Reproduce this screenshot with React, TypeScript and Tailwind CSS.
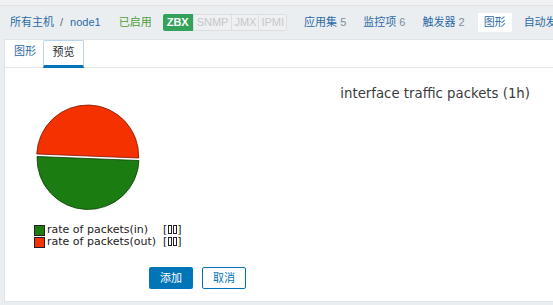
import React from "react";

const cjk = { fontFamily: '"Liberation Sans", "Noto Sans CJK SC", Arial, sans-serif' };
const dv = { fontFamily: '"DejaVu Sans", "Noto Sans CJK SC", sans-serif' };

function Tofu() {
  return <span className="inline-block w-[4px] h-[9px] border border-[#222] mx-[0.5px] align-[-1px]" />;
}

function Pie() {
  const cx = 52, cy = 53, r = 51;
  const a = (2.25 * Math.PI) / 180;
  const dx = r * Math.cos(a), dy = r * Math.sin(a);
  const L = [cx - dx, cy - dy], R = [cx + dx, cy + dy];
  const green = `M${cx},${cy} L${R[0]},${R[1]} A${r},${r} 0 0 1 ${L[0]},${L[1]} Z`;
  const red = `M${cx},${cy} L${L[0]},${L[1]} A${r},${r} 0 0 1 ${R[0]},${R[1]} Z`;
  return (
    <svg width="106" height="108" viewBox="0 0 106 108">
      <path d={green} transform="translate(0,1.5)" fill="#1A7C11" stroke="#0d3e08" strokeWidth="0.8" />
      <path d={red} transform="translate(-0.3,-1)" fill="#F63100" stroke="#7b1800" strokeWidth="0.8" />
    </svg>
  );
}

export default function App() {
  return (
    <div className="w-[553px] h-[305px] bg-[#ebeef0] overflow-hidden text-[11px]" style={cjk}>
      <div className="h-[6px] bg-[#eff1f3] border-b border-[#e0e4e7]" />
      <div className="h-[33px] flex items-center pl-[10px] whitespace-nowrap overflow-hidden">
        <span className="text-[#2b6aa6]">所有主机</span>
        <span className="text-[#5f6b73] ml-[6px] mr-[7px]">/</span>
        <span className="text-[#2b6aa6]">node1</span>
        <span className="text-[#4e9f39] ml-[18px]">已启用</span>
        <div className="flex ml-[11px] h-[17px] text-[11px]">
          <span className="bg-[#34a25a] text-white font-bold px-[4px] leading-[17px] rounded-l-[2px]">ZBX</span>
          <span className="text-[#c4c9cc] bg-[#eef0f1] border border-[#dcdfe1] px-[3px] leading-[15px]">SNMP</span>
          <span className="text-[#c4c9cc] bg-[#eef0f1] border border-l-0 border-[#dcdfe1] px-[2px] leading-[15px]">JMX</span>
          <span className="text-[#c4c9cc] bg-[#eef0f1] border border-l-0 border-[#dcdfe1] px-[2px] leading-[15px] rounded-r-[2px]">IPMI</span>
        </div>
        <span className="text-[#2b6aa6] ml-[17px]">应用集 <span className="text-[#7d8d96]">5</span></span>
        <span className="text-[#2b6aa6] ml-[17px]">监控项 <span className="text-[#7d8d96]">6</span></span>
        <span className="text-[#2b6aa6] ml-[17px]">触发器 <span className="text-[#7d8d96]">2</span></span>
        <span className="text-[#2b6aa6] ml-[13px] bg-white px-[6px] h-[19px] leading-[19px]">图形</span>
        <span className="text-[#2b6aa6] ml-[12px]">自动发现规则</span>
      </div>
      <div className="ml-[4px] h-[263px] bg-white border-l border-t border-b border-[#dfe4e7]">
        <div className="h-[28px] flex items-end border-b border-[#e6e9eb]">
          <span className="text-[#2b6aa6] ml-[9px] mb-[8px]">图形</span>
          <span className="ml-[7px] h-[28px] w-[41px] border border-[#b7d5f0] border-b-[3px] border-b-[#0275b8] rounded-t-[2px] flex items-center justify-center text-[#1f2c33] mb-[-1px] pb-[1px]">预览</span>
        </div>
        <div className="relative">
          <div className="flex justify-end pr-[23px] pt-[18px]">
            <span className="text-[13.3px] leading-[16px] text-[#3b3b3b]" style={dv}>interface traffic packets (1h)</span>
          </div>
          <div className="ml-[31px] mt-[2px]">
            <Pie />
          </div>
          <div className="ml-[29px] mt-[12px] text-[11px] text-[#222] leading-[12px]" style={dv}>
            <div className="flex items-center">
              <span className="w-[11px] h-[11px] bg-[#1A7C11] border border-[#222]" />
              <span className="ml-[2px] w-[116px]">rate of packets(in)</span>
              <span>[<Tofu /><Tofu />]</span>
            </div>
            <div className="flex items-center">
              <span className="w-[11px] h-[11px] bg-[#F63100] border border-[#222]" />
              <span className="ml-[2px] w-[116px]">rate of packets(out)</span>
              <span>[<Tofu /><Tofu />]</span>
            </div>
          </div>
          <div className="flex ml-[144px] mt-[19px] gap-[9px]">
            <button className="w-[44px] h-[22px] bg-[#0275b8] text-white rounded-[2px] text-[11px]" style={cjk}>添加</button>
            <button className="w-[44px] h-[22px] bg-white text-[#0275b8] border border-[#0275b8] rounded-[2px] text-[11px]" style={cjk}>取消</button>
          </div>
        </div>
      </div>
    </div>
  );
}
